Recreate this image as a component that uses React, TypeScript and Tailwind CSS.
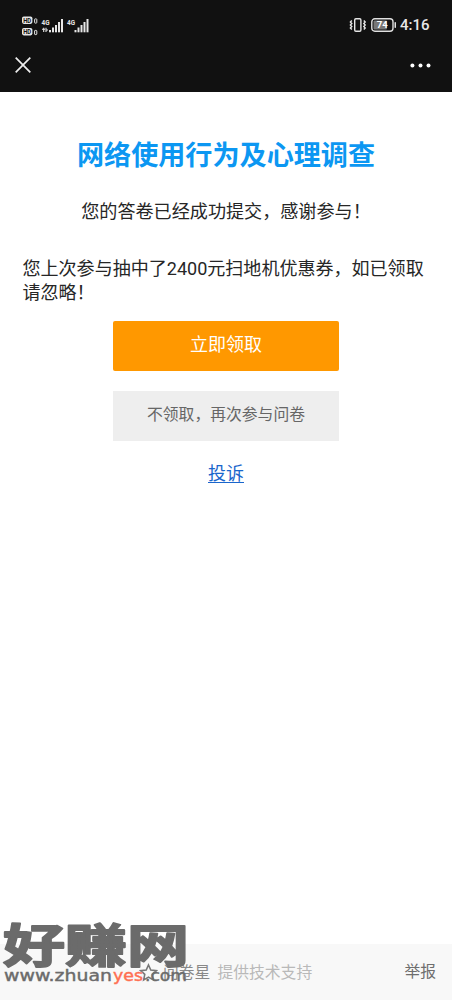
const FONT = "font-['Roboto','Noto_Sans_CJK_SC',sans-serif]";

// HD badges for both SIM cards, then the two signal meters
const SignalIcons = () => (
	<svg width="70" height="24" viewBox="20 12 70 24" fill="#e6e6e6">
		{[
			{ y: 15.5, sim: "1" },
			{ y: 27, sim: "2" },
		].map(({ y, sim }) => (
			<g key={sim} fontFamily="Roboto" fontWeight="700">
				<rect x="22" y={y} width="10.4" height="7.4" rx="1.8" />
				<text
					x="23.2"
					y={y + 6}
					fontSize="6.5"
					textLength="8"
					lengthAdjust="spacingAndGlyphs"
					fill="#111"
				>
					HD
				</text>
				<rect
					x="34.6"
					y={y + 2.4}
					width="2.2"
					height="4.2"
					rx="0.6"
					fill="none"
					stroke="#e6e6e6"
				/>
			</g>
		))}
		<g fontFamily="Roboto" fontWeight="700" fontSize="7.5">
			<text x="41.5" y="24" textLength="8" lengthAdjust="spacingAndGlyphs">
				4G
			</text>
			<text x="67" y="24" textLength="8" lengthAdjust="spacingAndGlyphs">
				4G
			</text>
		</g>
		<path
			d="M42 28.3h3M43.7 26.7v4.4M46 26.7v4.4M46 29h2"
			fill="none"
			stroke="#e6e6e6"
			strokeWidth="1.1"
		/>
		{[49, 74.5].map((x) => (
			<g key={x}>
				<rect x={x} y="29" width="2" height="2.3" />
				<rect x={x + 3} y="26.5" width="2" height="4.8" />
				<rect x={x + 6} y="24" width="2" height="7.3" />
				<rect x={x + 9} y="21" width="2" height="10.3" />
				<rect x={x + 12} y="18" width="2" height="13.3" />
			</g>
		))}
	</svg>
);

const VibrateIcon = () => (
	<svg
		width="18"
		height="16"
		viewBox="0 0 18 16"
		fill="none"
		stroke="#e6e6e6"
		strokeWidth="1.4"
	>
		<rect x="5.7" y="1.7" width="6.2" height="12.6" rx="1.2" />
		<path d="M2.8 3.5 1.4 5l1.4 1.5L1.4 8l1.4 1.5L1.4 11l1.4 1.5M14.8 3.5 16.2 5l-1.4 1.5L16.2 8l-1.4 1.5 1.4 1.5-1.4 1.5" />
	</svg>
);

const BatteryIcon = () => (
	<svg width="26" height="14" viewBox="0 0 26 14">
		<rect
			x="0.8"
			y="0.8"
			width="21.2"
			height="12.4"
			rx="3"
			fill="none"
			stroke="#e0e0e0"
			strokeWidth="1.4"
		/>
		<rect x="2.5" y="2.5" width="13.5" height="9" rx="1" fill="#777" />
		<rect x="23.5" y="4" width="1.5" height="6" rx="0.7" fill="#e0e0e0" />
		<text
			x="11.3"
			y="10.4"
			textAnchor="middle"
			fontFamily="Roboto"
			fontSize="9.5"
			fontWeight="700"
			fill="#fff"
		>
			74
		</text>
	</svg>
);

const Header = () => (
	<header className="h-[92px] bg-[#111111] text-white">
		<div className="flex h-[46px] items-center justify-between pt-[3px] pr-[22px] pl-5">
			<SignalIcons />
			<div className="flex items-center">
				<VibrateIcon />
				<div className="ml-1">
					<BatteryIcon />
				</div>
				<span className="ml-[3px] w-[30px] pt-px text-[15px] leading-none font-medium whitespace-nowrap text-[#e8e8e8]">
					4:16
				</span>
			</div>
		</div>
		<div className="flex h-[38px] items-center justify-between pr-[21px] pl-[15px]">
			<svg
				width="16"
				height="16"
				viewBox="0 0 16 16"
				stroke="#eee"
				strokeWidth="1.7"
			>
				<path d="m.7.7 14.6 14.6M15.3.7.7 15.3" />
			</svg>
			<svg width="21" height="5" viewBox="0 0 21 5" fill="#fff">
				<circle cx="2.4" cy="2.5" r="2" />
				<circle cx="10.5" cy="2.5" r="2" />
				<circle cx="18.5" cy="2.5" r="2" />
			</svg>
		</div>
	</header>
);

const Watermark = () => (
	<svg
		className="absolute bottom-0 left-0"
		width="200"
		height="120"
		viewBox="0 880 200 120"
		fill="#6b6b6b"
	>
		<text
			x="3"
			y="961.5"
			textLength="186"
			lengthAdjust="spacingAndGlyphs"
			fontFamily="'Noto Sans CJK SC', sans-serif"
			fontSize="46"
			fontWeight="700"
			stroke="#6b6b6b"
			strokeWidth="1.8"
			strokeLinejoin="round"
		>
			好赚网
		</text>
		<g
			fontFamily="'DejaVu Sans', Verdana, sans-serif"
			fontSize="15"
			strokeWidth="0.4"
		>
			<g stroke="#6b6b6b">
				<text x="4" y="981" textLength="108" lengthAdjust="spacingAndGlyphs">
					www.zhuan
				</text>
				<text x="145" y="981" textLength="42" lengthAdjust="spacingAndGlyphs">
					.com
				</text>
			</g>
			<text
				x="113"
				y="981"
				textLength="30"
				lengthAdjust="spacingAndGlyphs"
				fill="#ff6f52"
				stroke="#ff6f52"
			>
				yes
			</text>
		</g>
	</svg>
);

const Footer = () => (
	<footer className="flex h-14 items-center bg-[#f8f8f8] pr-4 pl-[139px] text-[15.8px] leading-6">
		<svg
			width="19"
			height="19"
			viewBox="0 0 24 24"
			fill="none"
			stroke="#777"
			strokeWidth="2"
		>
			<path d="m12 2.5 2.9 6.4 7 .8-5.2 4.7 1.4 6.9-6.1-3.5-6.1 3.5 1.4-6.9L2.1 9.7l7-.8z" />
		</svg>
		<span className="ml-[5px] pt-0.5 text-[#888888]">问卷星</span>
		<span className="ml-[7px] pt-0.5 text-[#b9b9b9]">提供技术支持</span>
		<span className="ml-auto text-[#6e6e6e]">举报</span>
	</footer>
);

const App = () => {
	return (
		<div
			className={`relative flex h-[1000px] w-[452px] flex-col bg-white ${FONT}`}
		>
			<Header />
			<main className="flex flex-1 flex-col items-center text-[18px] leading-6 text-[#262626]">
				<h1 className="mt-11 text-[27.1px] leading-10 font-bold text-[#0c97f2]">
					网络使用行为及心理调查
				</h1>
				<p className="mt-6 text-[18.1px]">您的答卷已经成功提交，感谢参与！</p>
				<p className="mt-[33px] w-full pr-4 pl-[22.5px] text-[18.05px]">
					您上次参与抽中了2400元扫地机优惠券，如已领取请忽略！
				</p>
				<button className="mt-4 h-[50px] w-[226px] rounded-[2px] bg-[#ff9800] pb-[3px] text-white">
					立即领取
				</button>
				<button className="mt-5 h-[50px] w-[226px] bg-[#eeeeee] pb-[3px] text-[15.8px] text-[#666666]">
					不领取，再次参与问卷
				</button>
				<a
					href="#"
					className="mt-[21px] text-[#1a66cc] underline decoration-1 underline-offset-2"
				>
					投诉
				</a>
			</main>
			<Footer />
			<Watermark />
		</div>
	);
};

export default App;
